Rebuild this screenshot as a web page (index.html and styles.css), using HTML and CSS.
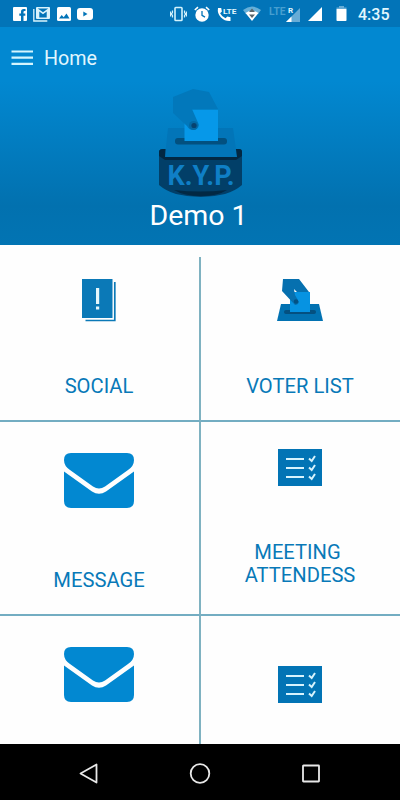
FILE: index.html
```
<!DOCTYPE html>
<html lang="en">
<head>
    <meta charset="utf-8">
    <meta name="viewport" content="width=device-width, initial-scale=1">
    <title>Home</title>
    <link rel="stylesheet" href="styles.css">
</head>
<body>
    <div class="status-bar">
        <div class="notifications">
            <svg width="14" height="14" viewBox="0 0 14 14">
                <path fill="#fff" d="M1 0h12a1 1 0 0 1 1 1v12a1 1 0 0 1-1 1h-2.5V8.7h1.8V6.5h-1.8V5q0-1 1-1h1V2h-1.8Q8 2 8 4.7v1.8H6.3v2.2H8V14H1a1 1 0 0 1-1-1V1a1 1 0 0 1 1-1z"/>
            </svg>
            <svg width="18" height="16" viewBox="0 0 18 16">
                <path fill="none" stroke="#d9f3fc" stroke-width="1.3" d="M.8 3v12h13.5"/>
                <rect x="3" y="1" width="14" height="12" rx="1" fill="#d9f3fc"/>
                <path fill="#0274b8" d="M4.800 2.500h10.400L10 6.200zM6.300 11.500V5.600l3.700 2.700 3.700-2.700v5.900z"/>
            </svg>
            <svg width="14" height="14" viewBox="0 0 14 14">
                <rect width="14" height="14" rx="1.5" fill="#fff"/>
                <path fill="#0274b8" d="M2 11.5 4.7 8l2 2.2L9.5 6.5l3 5z"/>
            </svg>
            <svg width="16" height="12" viewBox="0 0 16 12">
                <rect width="16" height="12" rx="3" fill="#fff"/>
                <path fill="#0274b8" d="M6.3 3.5v5l4.2-2.5z"/>
            </svg>
        </div>
        <div class="system">
            <svg width="17" height="16" viewBox="0 0 17 16">
                <rect x="5" y="1.5" width="7" height="13" rx=".8" fill="none" stroke="#d2f2fc" stroke-width="1.6"/>
                <path fill="none" stroke="#d2f2fc" stroke-width="1.2" d="M2.5 4.5v2l-1 1.5 1 1.5v2M.6 5.5v5M14.5 4.5v2l1 1.5-1 1.5v2M16.4 5.5v5"/>
            </svg>
            <svg class="alarm" width="16" height="16" viewBox="0 0 16 16">
                <circle cx="8" cy="9" r="6.7" fill="#fff"/>
                <path fill="none" stroke="#fff" stroke-width="1.6" d="M.8 4 4 1.2M15.2 4 12 1.2"/>
                <path fill="none" stroke="#0274b8" stroke-width="1.3" d="M8 5v4.3l3 1.8"/>
            </svg>
            <svg class="call" width="20" height="16" viewBox="0 0 20 16">
                <path fill="#fff" d="M1 2h3.2l.7 3.5L3.1 7.3Q5 11 8.5 12.3l1.8-1.8 3.2.8V15Q8 15.5 4 11.5T1 2z"/>
                <text class="lte" x="6" y="7.5" textLength="13.500" lengthAdjust="spacingAndGlyphs">LTE</text>
            </svg>
            <svg class="wifi" width="18" height="15" viewBox="0 0 18 15">
                <path fill="#66afd8" d="M0 4Q9-3 18 4l-3 4H3z"/>
                <path fill="#fff" d="M2.5 7Q9 2.5 15.5 7L9 15z"/>
                <path fill="#59656b" d="m9 2.5 3 3.5H6zM9 12 6 8.5h6z"/>
            </svg>
            <svg class="roaming" width="33" height="16" viewBox="0 0 33 16">
                <path fill="#67acd6" d="M32 2v14H18z"/>
                <path fill="#fff" d="M23.5 10.5V16H18z"/>
                <path fill="#0274b8" d="M19 0h6v8h-6z"/>
                <text class="lte dim" x="1" y="9" textLength="16.500" lengthAdjust="spacingAndGlyphs">LTE</text>
                <text class="lte roam" x="20" y="7">R</text>
            </svg>
            <svg class="signal" width="14" height="14" viewBox="0 0 14 14">
                <path fill="#fff" d="M14 0v14H0z"/>
            </svg>
            <svg class="battery" width="11" height="15" viewBox="0 0 11 15">
                <path fill="#67acd6" d="M3 0h5v1.5h2.5V4H.5V1.5H3z"/>
                <rect x=".5" y="3" width="10" height="12" rx=".8" fill="#fff"/>
            </svg>
            <span class="clock">4:35</span>
        </div>
    </div>

    <header class="header">
        <div class="toolbar">
            <svg width="22" height="16" viewBox="0 0 22 16">
                <path stroke="#d4f5fe" stroke-width="2.200" d="M.5 1.500H22M.5 7.700H22M.5 13.900H22"/>
            </svg>
            <h1>Home</h1>
        </div>
        <svg class="logo" width="86" height="108" viewBox="0 0 86 108">
            <path fill="#023f68" d="M1 63q0-3 4-3h76q3 0 3 3v33q-7 6-17 9-24 6-49 0Q8 102 1 96z"/>
            <path fill="#022843" d="M1 63q0-3 4-3h2v7h71v-7h3q3 0 3 3v4l-6 4H7l-6-4zM16 101q26 3 53 0-9 6-26 6-17 0-27-6z"/>
            <path fill="#0275b8" d="M10 39h65l4 29H7z"/>
            <rect x="17" y="49" width="52" height="6.500" rx="3" fill="#02507f"/>
            <path fill="#0698e9" d="M26.500 21H60v31H26.500z"/>
            <path fill="#0278bb" d="M15 8 35 0l16 3 9 17H34l7 16q-1 5-6 5-4 0-6-4L15 24z"/>
            <circle cx="35.500" cy="36.500" r="4.500" fill="#0369a5"/>
            <circle cx="36" cy="36.500" r="2.600" fill="#07426f"/>
            <text x="9.500" y="95.500" textLength="67" lengthAdjust="spacingAndGlyphs">K.Y.P.</text>
        </svg>
        <p class="name">Demo 1</p>
    </header>

    <!-- shared by the repeated tiles -->
    <svg class="defs" width="0" height="0">
        <symbol id="mail" viewBox="0 0 70 55">
            <path fill="#0288d1" d="M7 0h56q7 0 7 7 0 6-6 10L41 33.500q-6 4-12 0L6 17Q0 13 0 7q0-7 7-7z"/>
            <path fill="#0288d1" d="m0 18.500 28 20q7 4.500 14 0l28-20V48q0 7-7 7H7q-7 0-7-7z"/>
        </symbol>
        <symbol id="checklist" viewBox="0 0 44 37">
            <rect width="44" height="37" fill="#0274b5"/>
            <path fill="none" stroke="#d7f3fd" stroke-width="2" d="M8 10h18M8 19h18M8 28h18"/>
            <path fill="none" stroke="#d7f3fd" stroke-width="2" d="m31 9.500 2.700 2.500 3.300-5M31 18.500l2.700 2.500 3.300-5M31 27.500l2.700 2.500 3.300-5"/>
        </symbol>
    </svg>

    <main class="menu">
        <div class="tile social">
            <svg width="34" height="43" viewBox="0 0 34 43">
                <path fill="#0b79b7" d="M0 0h30.500v39H0z"/>
                <path fill="none" stroke="#0b79b7" stroke-width="1.700" d="M32.800 3v38.500H3.500"/>
                <path fill="#e6f7fc" d="M14 9h3.200v16H14zM14 27.500h3.200v3H14z"/>
            </svg>
            <span>SOCIAL</span>
        </div>
        <div class="tile voters">
            <svg width="46" height="42" viewBox="0 0 46 42">
                <path fill="#0272b2" d="M4 25h38l4 17H0z"/>
                <rect x="7" y="31" width="32" height="4" rx="2" fill="#045080"/>
                <path fill="#0693e2" d="M13 13h20v20H13z"/>
                <path fill="#0670af" d="M6 0h16l10 13H20l-3-3 1 6 4 7q-1 3-4 3L5 12z"/>
                <circle cx="19" cy="22.500" r="2.200" fill="#035184"/>
            </svg>
            <span>VOTER LIST</span>
        </div>
        <div class="tile mail">
            <svg width="70" height="55"><use href="#mail"/></svg>
            <span>MESSAGE</span>
        </div>
        <div class="tile meeting">
            <svg width="44" height="37"><use href="#checklist"/></svg>
            <span>MEETING&nbsp;<br>ATTENDESS</span>
        </div>
        <div class="tile mail">
            <svg width="70" height="55"><use href="#mail"/></svg>
        </div>
        <div class="tile last">
            <svg width="44" height="37"><use href="#checklist"/></svg>
        </div>
    </main>

    <nav class="nav-bar">
        <svg width="20" height="22" viewBox="0 0 20 22">
            <path fill="none" stroke="#e8e8e8" stroke-width="1.800" stroke-linejoin="round" d="M17.500 1.500v18L1.500 10.500z"/>
        </svg>
        <svg width="22" height="22" viewBox="0 0 22 22">
            <circle cx="11" cy="10.500" r="9.300" fill="none" stroke="#e8e8e8" stroke-width="1.800"/>
        </svg>
        <svg width="20" height="20" viewBox="0 0 20 20">
            <rect x="2" y="1.500" width="16" height="16" rx=".5" fill="none" stroke="#e8e8e8" stroke-width="1.800"/>
        </svg>
    </nav>
</body>
</html>
```
FILE: styles.css
```
* {
    box-sizing: border-box;
}
body {
    margin: 0;
    height: 800px;
    display: flex;
    flex-direction: column;
    overflow: hidden;
    font-family: Roboto, sans-serif;
    background: #fefefe;
}
svg {
    display: block;
    flex: none;
}
.defs {
    position: absolute;
}
.status-bar {
    height: 27px;
    padding: 0 11px 0 13px;
    display: flex;
    align-items: center;
    justify-content: space-between;
    background: #0274b8;
}
.notifications,
.system {
    display: flex;
    align-items: center;
}
.notifications {
    gap: 6px;
}
.alarm,
.call,
.roaming,
.signal {
    margin-left: 7px;
}
.wifi {
    margin-left: 6px;
}
.battery {
    margin-left: 14px;
}
.clock {
    width: 31px;
    margin-left: 11px;
    padding-top: 2px;
    font-size: 16px;
    font-weight: 500;
    line-height: 20px;
    color: #e2f7fe;
    white-space: nowrap;
}
.lte {
    font-size: 8px;
    font-weight: 700;
    fill: #e2f7fe;
}
.dim {
    font-size: 10px;
    fill: #479fd0;
}
.header {
    height: 218px;
    display: flex;
    flex-direction: column;
    align-items: center;
    color: #fff;
    background: linear-gradient(#0288d1 25%, #0271af 82%, #0274b3);
}
.toolbar {
    width: 100%;
    height: 62px;
    padding-left: 11px;
    display: flex;
    align-items: center;
    gap: 11px;
}
.toolbar h1 {
    margin: 1px 0 0;
    font-size: 19.7px;
    font-weight: 400;
    color: #e0f6fe;
}
.logo {
    margin-left: 2px;
}
.logo text {
    font-size: 27px;
    font-weight: 700;
    fill: #0f7fc6;
}
.name {
    margin: 1px 0 0;
    padding-right: 3px;
    font-size: 28.5px;
    line-height: 36px;
}
.menu {
    flex: 1;
    padding-top: 12px;
    display: grid;
    grid-template-columns: 201px 199px;
    grid-template-rows: 165px 194px 128px;
}
.tile {
    display: flex;
    flex-direction: column;
    align-items: center;
    justify-content: space-between;
    padding: 22px 1px 22px 0;
    border-bottom: 2px solid #73adc2;
    font-size: 20.2px;
    line-height: 23px;
    text-align: center;
    color: #0879b8;
}
.tile:nth-child(odd) {
    border-right: 2px solid #7fb2c1;
}
.tile:nth-last-child(-n+2) {
    border-bottom: none;
}
.mail {
    padding-top: 31px;
}
.meeting {
    padding-top: 27px;
    padding-bottom: 27px;
}
.last {
    padding-top: 50px;
}
.nav-bar {
    height: 56px;
    padding: 3px 79px 0;
    display: flex;
    align-items: center;
    justify-content: space-between;
    background: #000;
}
```
